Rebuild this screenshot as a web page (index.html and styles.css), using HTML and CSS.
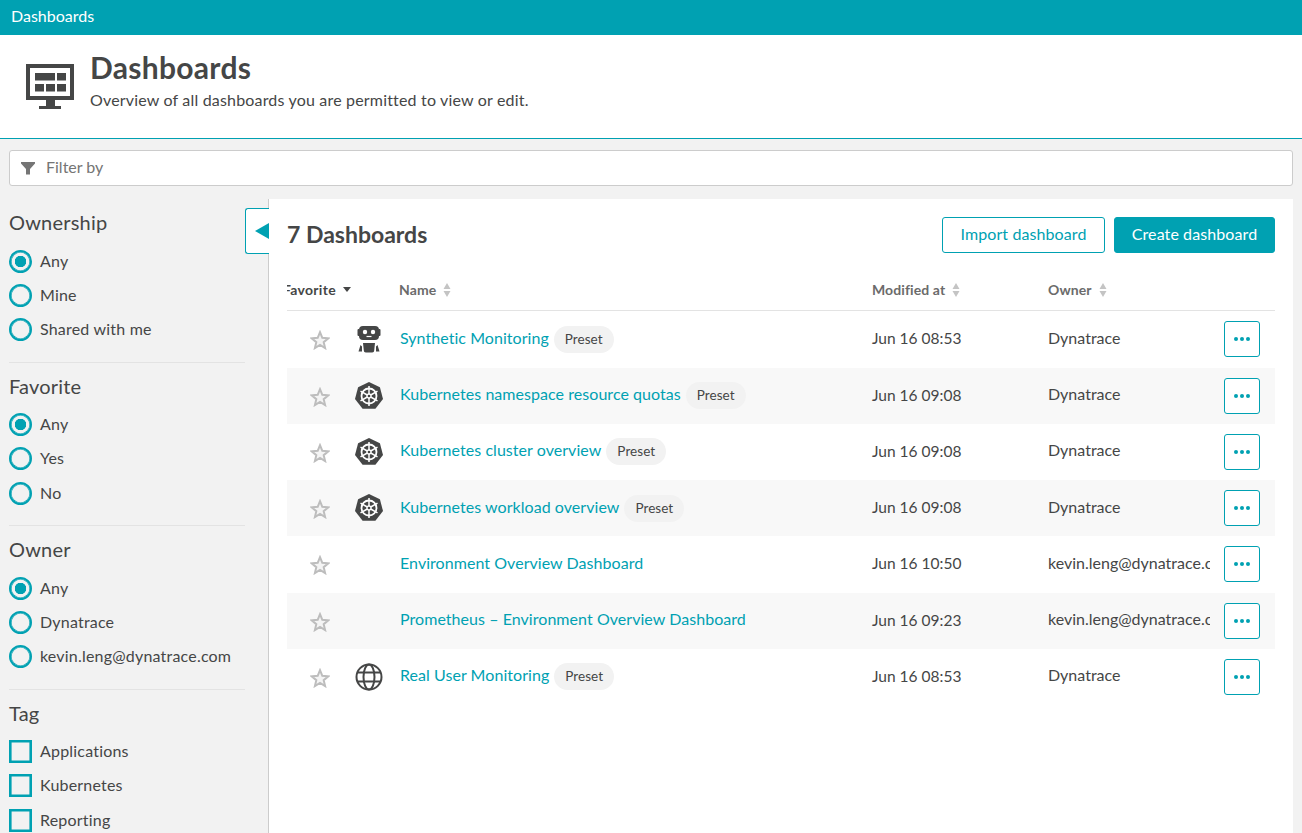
FILE: index.html
```html
<!DOCTYPE html>
<html lang="en">
<head>
    <meta charset="UTF-8">
    <title>Dashboards</title>
    <link rel="stylesheet" href="styles.css">
</head>
<body>
<svg class="defs" width="0" height="0" aria-hidden="true">
    <symbol id="star" viewBox="0 0 20 20">
        <path d="M10 2.2l2.300 5.600 6 .5-4.600 3.900 1.400 5.900L10 15l-5.100 3.100 1.400-5.900-4.600-3.900 6-.5z" fill="#f4f4f4" stroke="#bdbdbd" stroke-width="2" stroke-linejoin="miter"/>
    </symbol>
    <symbol id="sort" viewBox="0 0 8 14">
        <path d="M4 0l3.500 6h-7zM4 14L.5 8h7z" fill="#c4c4c4"/>
    </symbol>
    <symbol id="kube" viewBox="0 0 28 28">
        <path d="M14 0l10.900 5.200 3.100 11.800-7.600 9.700H7.600L0 17 3.100 5.200z" fill="#454646"/>
        <g fill="none" stroke="#fff">
            <circle cx="14" cy="14" r="7.500" stroke-width="1.800"/>
            <circle cx="14" cy="14" r="2" stroke-width="1.300"/>
            <path stroke-width="1.500" d="M14 4v8M14 16v8M5.500 9.200l6.800 3.800M15.700 15l6.800 3.800M22.500 9.200l-6.800 3.800M12.300 15l-6.800 3.800"/>
        </g>
    </symbol>
    <symbol id="robot" viewBox="0 0 24 28">
        <rect x="2" y="1" width="20" height="14" rx="4" fill="#454646"/>
        <path d="M1.500 4h.5v7h-.5a1 1 0 0 1-1-1V5a1 1 0 0 1 1-1zM22 4h.5a1 1 0 0 1 1 1v5a1 1 0 0 1-1 1H22z" fill="#454646"/>
        <circle cx="8" cy="7" r="2.200" fill="#fff"/>
        <circle cx="16" cy="7" r="2.200" fill="#fff"/>
        <path d="M9.500 11.500h5" stroke="#fff" stroke-width="1.200"/>
        <path d="M6 18h12l-.8 7.500a2 2 0 0 1-2 2H8.800a2 2 0 0 1-2-2z" fill="#454646"/>
        <path d="M3.500 20L5 21.500v5H1.500zM20.500 20L19 21.500v5h3.500z" fill="#454646"/>
    </symbol>
    <symbol id="globe" viewBox="0 0 28 28">
        <g fill="none" stroke="#454646" stroke-width="2">
            <circle cx="14" cy="14" r="12.500"/>
            <ellipse cx="14" cy="14" rx="5.500" ry="12.500"/>
            <path d="M3 9.500h22M3 18.500h22"/>
        </g>
    </symbol>
</svg>

<header class="topbar">Dashboards</header>

<section class="pagehead">
    <svg class="pagehead-icon" width="48" height="45" viewBox="0 0 48 45">
        <path fill="#454646" fill-rule="evenodd" d="M0 0h48v36H29v6h6v3H13v-3h7v-6H0zM4 4v28h40V4z"/>
        <path fill="#454646" d="M9 9h20v7.500H9zM31 9h9v7.500h-9zM9 20h9v7.500H9zM20 20h9v7.500h-9zM31 20h9v7.500h-9z"/>
    </svg>
    <div>
        <h1 class="pagehead-title">Dashboards</h1>
        <p class="pagehead-sub">Overview of all dashboards you are permitted to view or edit.</p>
    </div>
</section>

<section class="filterwrap">
    <div class="filterbar">
        <svg width="14" height="14" viewBox="0 0 14 14"><path fill="#757575" d="M0 1h14v1.500L9 8v5.500H5V8L0 2.500z"/></svg>
        <span class="filterbar-text">Filter by</span>
    </div>
</section>

<section class="layout">
    <aside class="sidebar">
        <div class="group">
            <h2 class="group-title">Ownership</h2>
            <div class="option"><i class="radio on"></i>Any</div>
            <div class="option"><i class="radio"></i>Mine</div>
            <div class="option"><i class="radio"></i>Shared with me</div>
        </div>
        <div class="group">
            <h2 class="group-title">Favorite</h2>
            <div class="option"><i class="radio on"></i>Any</div>
            <div class="option"><i class="radio"></i>Yes</div>
            <div class="option"><i class="radio"></i>No</div>
        </div>
        <div class="group">
            <h2 class="group-title">Owner</h2>
            <div class="option"><i class="radio on"></i>Any</div>
            <div class="option"><i class="radio"></i>Dynatrace</div>
            <div class="option"><i class="radio"></i>kevin.leng@dynatrace.com</div>
        </div>
        <div class="group">
            <h2 class="group-title">Tag</h2>
            <div class="option"><i class="check"></i>Applications</div>
            <div class="option"><i class="check"></i>Kubernetes</div>
            <div class="option"><i class="check"></i>Reporting</div>
        </div>
        <button class="collapse"><svg width="14" height="16" viewBox="0 0 14 16"><path fill="#00a1b2" d="M14 0v16L0 8z"/></svg></button>
    </aside>

    <main class="content">
        <div class="titlerow">
            <h2 class="count">7 Dashboards</h2>
            <div class="actions">
                <button class="btn">Import dashboard</button>
                <button class="btn primary">Create dashboard</button>
            </div>
        </div>

        <div class="tablehead">
            <div class="th th-fav">Favorite <svg class="sortdown" width="8" height="5" viewBox="0 0 8 5"><path fill="#454646" d="M0 0h8L4 5z"/></svg></div>
            <div class="th th-name">Name <svg class="sorticon" width="8" height="14"><use href="#sort"/></svg></div>
            <div class="th">Modified at <svg class="sorticon" width="8" height="14"><use href="#sort"/></svg></div>
            <div class="th">Owner <svg class="sorticon" width="8" height="14"><use href="#sort"/></svg></div>
        </div>

        <div class="row">
            <div class="cell-star"><svg width="20" height="20"><use href="#star"/></svg></div>
            <div class="cell-icon"><svg width="24" height="28"><use href="#robot"/></svg></div>
            <div class="cell-name"><a class="link">Synthetic Monitoring</a><span class="tag">Preset</span></div>
            <div class="cell-date">Jun 16 08:53</div>
            <div class="cell-owner">Dynatrace</div>
            <div class="cell-more"><button class="more"><i></i><i></i><i></i></button></div>
        </div>
        <div class="row">
            <div class="cell-star"><svg width="20" height="20"><use href="#star"/></svg></div>
            <div class="cell-icon"><svg width="28" height="28"><use href="#kube"/></svg></div>
            <div class="cell-name"><a class="link">Kubernetes namespace resource quotas</a><span class="tag">Preset</span></div>
            <div class="cell-date">Jun 16 09:08</div>
            <div class="cell-owner">Dynatrace</div>
            <div class="cell-more"><button class="more"><i></i><i></i><i></i></button></div>
        </div>
        <div class="row">
            <div class="cell-star"><svg width="20" height="20"><use href="#star"/></svg></div>
            <div class="cell-icon"><svg width="28" height="28"><use href="#kube"/></svg></div>
            <div class="cell-name"><a class="link">Kubernetes cluster overview</a><span class="tag">Preset</span></div>
            <div class="cell-date">Jun 16 09:08</div>
            <div class="cell-owner">Dynatrace</div>
            <div class="cell-more"><button class="more"><i></i><i></i><i></i></button></div>
        </div>
        <div class="row">
            <div class="cell-star"><svg width="20" height="20"><use href="#star"/></svg></div>
            <div class="cell-icon"><svg width="28" height="28"><use href="#kube"/></svg></div>
            <div class="cell-name"><a class="link">Kubernetes workload overview</a><span class="tag">Preset</span></div>
            <div class="cell-date">Jun 16 09:08</div>
            <div class="cell-owner">Dynatrace</div>
            <div class="cell-more"><button class="more"><i></i><i></i><i></i></button></div>
        </div>
        <div class="row">
            <div class="cell-star"><svg width="20" height="20"><use href="#star"/></svg></div>
            <div class="cell-icon"></div>
            <div class="cell-name"><a class="link">Environment Overview Dashboard</a></div>
            <div class="cell-date">Jun 16 10:50</div>
            <div class="cell-owner">kevin.leng@dynatrace.com</div>
            <div class="cell-more"><button class="more"><i></i><i></i><i></i></button></div>
        </div>
        <div class="row">
            <div class="cell-star"><svg width="20" height="20"><use href="#star"/></svg></div>
            <div class="cell-icon"></div>
            <div class="cell-name"><a class="link">Prometheus – Environment Overview Dashboard</a></div>
            <div class="cell-date">Jun 16 09:23</div>
            <div class="cell-owner">kevin.leng@dynatrace.com</div>
            <div class="cell-more"><button class="more"><i></i><i></i><i></i></button></div>
        </div>
        <div class="row">
            <div class="cell-star"><svg width="20" height="20"><use href="#star"/></svg></div>
            <div class="cell-icon"><svg width="28" height="28"><use href="#globe"/></svg></div>
            <div class="cell-name"><a class="link">Real User Monitoring</a><span class="tag">Preset</span></div>
            <div class="cell-date">Jun 16 08:53</div>
            <div class="cell-owner">Dynatrace</div>
            <div class="cell-more"><button class="more"><i></i><i></i><i></i></button></div>
        </div>
    </main>
</section>
</body>
</html>
```

FILE: styles.css
```css
html, body {
    height: 100%;
}

body {
    margin: 0;
    display: flex;
    flex-direction: column;
    height: 833px;
    overflow: hidden;
    background-color: #f2f2f2;
    color: #454646;
    font-family: "Lato", "Open Sans", sans-serif;
    font-size: 16px;
}

.defs {
    position: absolute;
}

.topbar {
    height: 35px;
    line-height: 32px;
    padding-left: 11px;
    background-color: #00a1b2;
    color: #fff;
}

.pagehead {
    display: flex;
    height: 103px;
    padding-left: 26px;
    background-color: #fff;
    border-bottom: 1px solid #00a1b2;
}

.pagehead-icon {
    margin-top: 29px;
    margin-right: 16px;
}

.pagehead-title {
    margin: 15px 0 0;
    font-size: 30px;
    line-height: 34px;
    font-weight: 700;
    letter-spacing: .3px;
}

.pagehead-sub {
    margin: 5px 0 0;
    line-height: 22px;
    letter-spacing: .18px;
}

.filterwrap {
    padding: 11px 9px 13px;
}

.filterbar {
    box-sizing: border-box;
    display: flex;
    align-items: center;
    gap: 11px;
    height: 36px;
    padding-left: 11px;
    background-color: #fff;
    border: 1px solid #ccc;
    border-radius: 3px;
    color: #757575;
}

.filterbar-text {
    margin-bottom: 4px;
}

.layout {
    display: flex;
    flex: 1;
    min-height: 0;
    padding-right: 9px;
}

.sidebar {
    position: relative;
    width: 236px;
    padding: 9px 23px 0 9px;
    border-right: 1px solid #ccc;
    flex-shrink: 0;
}

.group {
    padding-bottom: 15px;
    margin-bottom: 9px;
    border-bottom: 1px solid #e3e3e3;
}

.group:last-of-type {
    border-bottom: 0;
}

.group-title {
    margin: 0 0 6px;
    padding-bottom: 2px;
    font-size: 20px;
    line-height: 28px;
    font-weight: 400;
    letter-spacing: .2px;
}

.option {
    box-sizing: border-box;
    display: flex;
    align-items: center;
    height: 34.2px;
    padding-bottom: 2px;
    letter-spacing: .2px;
}

.radio, .check {
    box-sizing: border-box;
    width: 23px;
    height: 23px;
    margin: 2px 8px 0 0;
    border: 2px solid #00a1b2;
    box-shadow: inset 0 0 0 .6px #00a1b2;
    flex-shrink: 0;
}

.radio {
    border-radius: 50%;
}

.radio.on {
    background: radial-gradient(circle, #00a1b2 0, #00a1b2 5.5px, transparent 6px);
}

.collapse {
    position: absolute;
    top: 9px;
    right: -1px;
    display: flex;
    align-items: center;
    justify-content: flex-end;
    width: 24px;
    height: 46px;
    padding: 0;
    background-color: #fff;
    border: 1px solid #00a1b2;
    border-right: 0;
    border-radius: 3px 0 0 3px;
}

.content {
    flex: 1;
    padding: 18px;
    background-color: #fff;
}

.titlerow {
    display: flex;
    justify-content: space-between;
    align-items: center;
    height: 36px;
}

.count {
    margin: 0 0 2px;
    font-size: 23px;
    font-weight: 700;
}

.actions {
    display: flex;
    gap: 9px;
}

.btn {
    height: 36px;
    width: 163px;
    padding: 0 0 4px;
    background-color: #fff;
    border: 1px solid #00a1b2;
    border-radius: 3px;
    color: #00a1b2;
    font: inherit;
    letter-spacing: .1px;
}

.btn.primary {
    width: 161px;
    background-color: #00a1b2;
    color: #fff;
}

.tablehead, .row {
    display: grid;
    grid-template-columns: 66px 47px 472px 176px 162px 65px;
    align-items: center;
}

.tablehead {
    height: 39.3px;
    margin-top: 18px;
    border-bottom: 1px solid #e3e3e3;
    overflow: hidden;
    font-size: 14px;
    font-weight: 700;
    letter-spacing: .1px;
    color: #6b6b6b;
}

.th {
    display: flex;
    align-items: center;
    padding-bottom: 2px;
    white-space: nowrap;
}

.th-fav {
    grid-column: span 2;
    margin-left: -4px;
    letter-spacing: .3px;
    color: #454646;
}

.th-name {
    margin-left: -1px;
}

.sorticon {
    margin-left: 7px;
}

.sortdown {
    margin-left: 7px;
}

.row {
    height: 56.25px;
}

.row:nth-of-type(even) {
    background-color: #f8f8f8;
}

.cell-star {
    display: flex;
    justify-content: center;
    padding-top: 2px;
}

.cell-icon {
    display: flex;
    justify-content: center;
    width: 32px;
}

.cell-name {
    display: flex;
    align-items: center;
    padding-bottom: 4px;
    letter-spacing: .05px;
}

.link {
    color: #00a1b2;
}

.tag {
    margin: 4px 0 0 5px;
    padding: 0 11px;
    height: 27px;
    line-height: 26px;
    border-radius: 14px;
    background-color: #f2f2f2;
    font-size: 13.500px;
}

.cell-date {
    padding-bottom: 2px;
    font-size: 15.500px;
}

.cell-owner {
    padding-bottom: 4px;
    overflow: hidden;
    white-space: nowrap;
}

.cell-more {
    padding-left: 14px;
}

.more {
    display: flex;
    align-items: center;
    justify-content: center;
    gap: 2px;
    width: 36px;
    height: 36px;
    padding: 0;
    background-color: #fff;
    border: 1px solid #00a1b2;
    border-radius: 3px;
}

.more i {
    width: 4px;
    height: 4px;
    border-radius: 50%;
    background-color: #00a1b2;
}
```
